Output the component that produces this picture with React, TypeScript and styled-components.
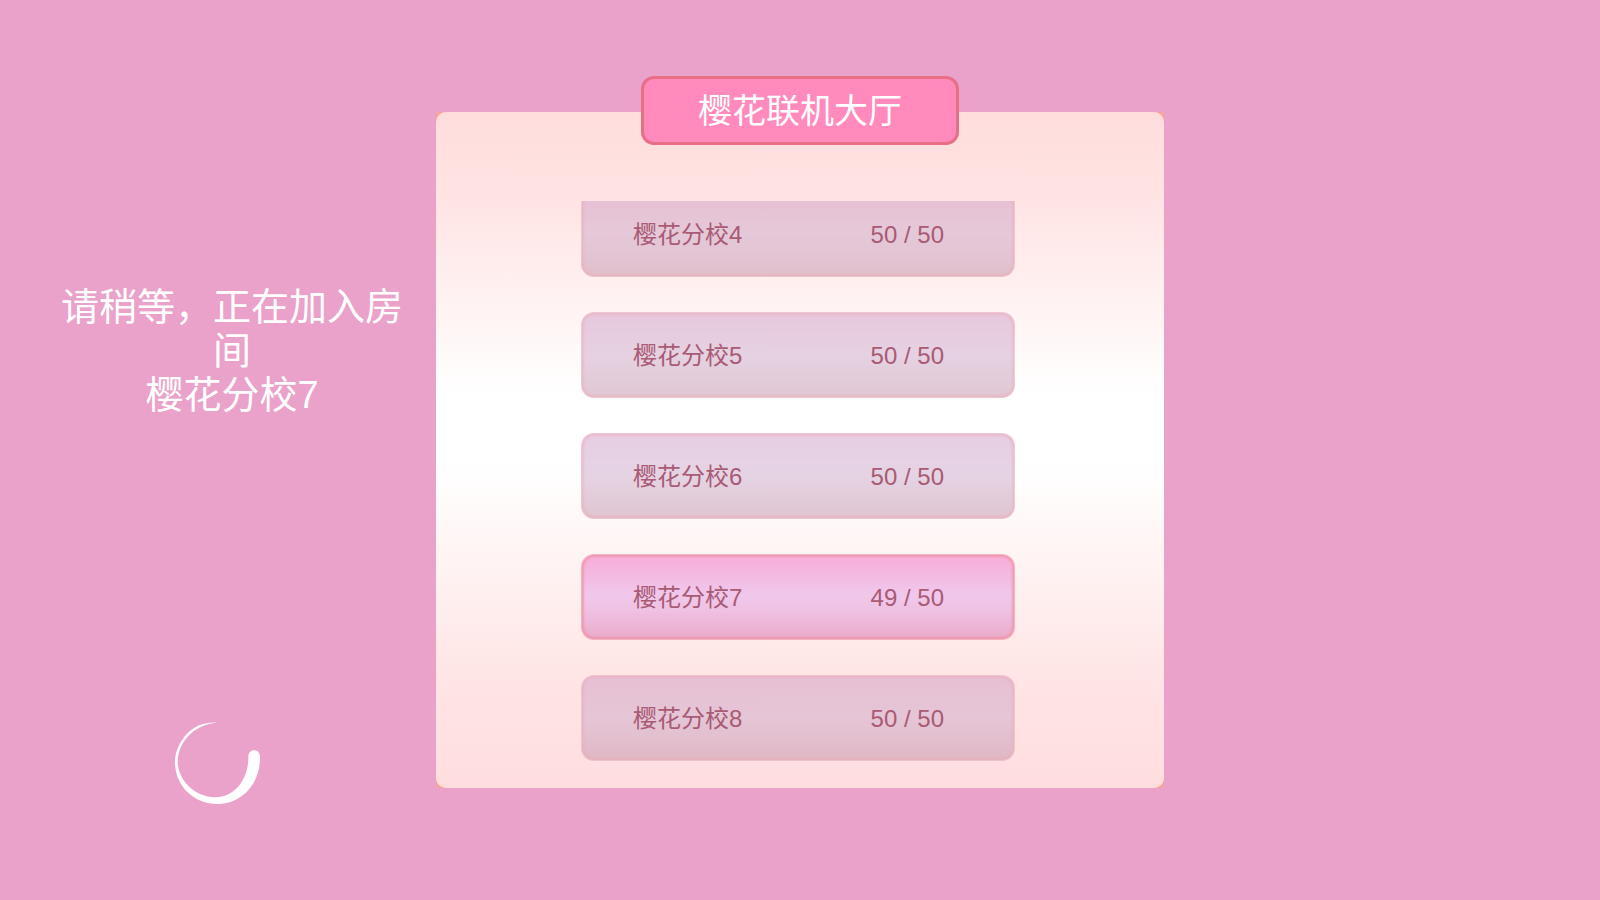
import React from 'react';
import styled, { createGlobalStyle } from 'styled-components';

const GlobalStyle = createGlobalStyle`
  * { box-sizing: border-box; }
  body {
    margin: 0;
    background: #eaa2ca;
    font-family: 'Liberation Sans', 'Noto Sans CJK SC', sans-serif;
  }
`;

const Page = styled.main`
  display: grid;
  grid-template-columns: 436fr 728fr 436fr;
  min-height: 100vh;
`;

const Status = styled.aside`
  display: flex;
  flex-direction: column;
  align-items: center;
  justify-content: space-between;
  padding: 285px 0 94px;
`;

const StatusText = styled.p`
  width: 100%;
  margin: 0;
  padding: 0 24px 0 52px;
  color: #fff;
  font-size: 38px;
  line-height: 44px;
  text-align: center;
`;

const Spinner = styled.svg`
  display: block;
  width: 88px;
  height: 86px;
`;

const PanelFrame = styled.section`
  position: relative;
  display: grid;
  margin: 112px 0;
  border-radius: 3px;
  background: #f8a49c;
`;

const Panel = styled.div`
  display: flex;
  flex-direction: column;
  align-items: center;
  padding: 89px 4px 27px 0;
  border-radius: 10px;
  background: linear-gradient(#ffdddc 0%, #ffe3e3 12%, #fff 42%, #fff 52%, #ffe5e5 84%, #ffdddf 100%);
`;

const Title = styled.h1`
  position: absolute;
  top: -36px;
  left: 50%;
  transform: translateX(-50%);
  display: flex;
  align-items: center;
  justify-content: center;
  width: 318px;
  height: 69px;
  margin: 0;
  border: 3px solid #e96f86;
  border-radius: 13px;
  background: #ff8abb;
  color: #fff;
  font-size: 34px;
  font-weight: 400;
  line-height: 40px;
`;

const RoomList = styled.ul`
  display: flex;
  flex-direction: column;
  justify-content: flex-end;
  gap: 35px;
  width: 434px;
  height: 560px;
  margin: 0;
  padding: 0;
  overflow: hidden;
  list-style: none;
`;

const RoomButton = styled.button<{ $open: boolean }>`
  display: flex;
  align-items: center;
  justify-content: space-between;
  width: 100%;
  height: 86px;
  padding: 2px 70px 0 51px;
  border: 1px solid ${(p) => (p.$open ? 'rgba(246, 178, 190, 0.9)' : 'rgba(240, 200, 205, 0.6)')};
  border-radius: 13px;
  box-shadow: inset 0 0 2px 2px ${(p) => (p.$open ? 'rgba(240, 145, 165, 0.75)' : 'rgba(236, 172, 186, 0.5)')};
  background: ${(p) =>
    p.$open
      ? 'linear-gradient(#f8acd8 0%, #f4b8e0 22%, #f0c8ec 48%, #efc1e2 66%, #eaa9c8 100%)'
      : 'linear-gradient(rgba(206, 150, 194, 0.48), rgba(200, 166, 200, 0.48) 50%, rgba(194, 144, 168, 0.5))'};
  background-origin: border-box;
  color: #a95a74;
  font: inherit;
  font-size: 24px;
  line-height: 30px;
  cursor: pointer;
`;

const rooms = [
  { name: '樱花分校4', players: 50 },
  { name: '樱花分校5', players: 50 },
  { name: '樱花分校6', players: 50 },
  { name: '樱花分校7', players: 49 },
  { name: '樱花分校8', players: 50 },
];

const capacity = 50;

export default function App() {
  return (
    <>
      <GlobalStyle />
      <Page>
        <Status>
          <StatusText role="status">
            请稍等，正在加入房间
            <br />
            樱花分校7
          </StatusText>
          <Spinner viewBox="42 30 264 258" aria-hidden="true">
            <path
              fill="#fff"
              d="M170 38C130 36 97 50 72 82C53 107 43 135 45 165C50 232 104 282 172 282C244 281 302 222 300 139C299 114 266 115 265 138C267 205 226 261 166 262C104 261 55 212 53 156C53 96 104 42 170 38Z"
            />
          </Spinner>
        </Status>
        <PanelFrame>
          <Title>樱花联机大厅</Title>
          <Panel>
            <RoomList>
              {rooms.map((room) => (
                <li key={room.name}>
                  <RoomButton type="button" $open={room.players < capacity}>
                    <span>{room.name}</span>
                    <span>
                      {room.players} / {capacity}
                    </span>
                  </RoomButton>
                </li>
              ))}
            </RoomList>
          </Panel>
        </PanelFrame>
      </Page>
    </>
  );
}
